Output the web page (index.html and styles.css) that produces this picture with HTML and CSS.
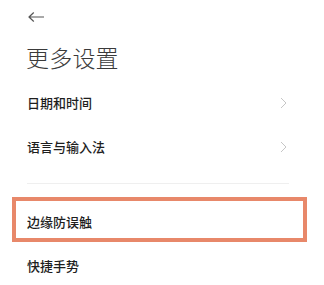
FILE: index.html
```html
<!DOCTYPE html>
<html lang="zh-CN">
<head>
<meta charset="utf-8">
<title>更多设置</title>
<link rel="stylesheet" href="styles.css">
</head>
<body>
<div class="page">
  <div class="back">
    <svg class="back-icon" width="16" height="10" viewBox="0 0 16 10">
      <path d="M15.5 5 H1 M5.5 0.8 L1 5 L5.5 9.2" fill="none" stroke="#555" stroke-width="1.2" stroke-linecap="round" stroke-linejoin="round"/>
    </svg>
  </div>
  <h1 class="title">更多设置</h1>
  <div class="list">
    <div class="row"><span class="label">日期和时间</span><svg class="chev" width="7" height="12" viewBox="0 0 7 12"><path d="M1 1 L6 6 L1 11" fill="none" stroke="#c6c6c6" stroke-width="1"/></svg></div>
    <div class="row"><span class="label">语言与输入法</span><svg class="chev" width="7" height="12" viewBox="0 0 7 12"><path d="M1 1 L6 6 L1 11" fill="none" stroke="#c6c6c6" stroke-width="1"/></svg></div>
  </div>
  <div class="divider"></div>
  <div class="list">
    <div class="row highlighted"><span class="label">边缘防误触</span><div class="mark"></div></div>
    <div class="row"><span class="label">快捷手势</span></div>
  </div>
</div>
</body>
</html>
```
FILE: styles.css
```css
html, body {
  margin: 0;
  padding: 0;
  background: #ffffff;
}
body {
  font-family: "Noto Sans CJK SC", "Noto Sans", sans-serif;
  color: #1c1c1c;
}
.page {
  width: 324px;
  height: 285px;
  overflow: hidden;
}
.back {
  height: 33px;
  display: flex;
  align-items: center;
  padding-left: 28px;
}
.back-icon {
  display: block;
}
.title {
  margin: 0;
  padding-left: 26px;
  height: 48px;
  line-height: 48px;
  font-size: 23px;
  font-weight: 300;
  color: #3a3a3a;
  letter-spacing: 0.2px;
}
.list {
  display: flex;
  flex-direction: column;
}
.row {
  position: relative;
  height: 44px;
  display: flex;
  align-items: center;
  justify-content: space-between;
  padding: 0 37px 0 27px;
}
.label {
  font-size: 13px;
  font-weight: 500;
  line-height: 44px;
  color: #1e1e1e;
}
.chev {
  display: block;
}
.divider {
  margin: 14px 35px 16px 27px;
  height: 1px;
  background: #efefef;
}
.mark {
  position: absolute;
  top: -3px;
  left: 12px;
  width: 295px;
  height: 45px;
  box-sizing: border-box;
  border: 4px solid #e8886a;
}
```
